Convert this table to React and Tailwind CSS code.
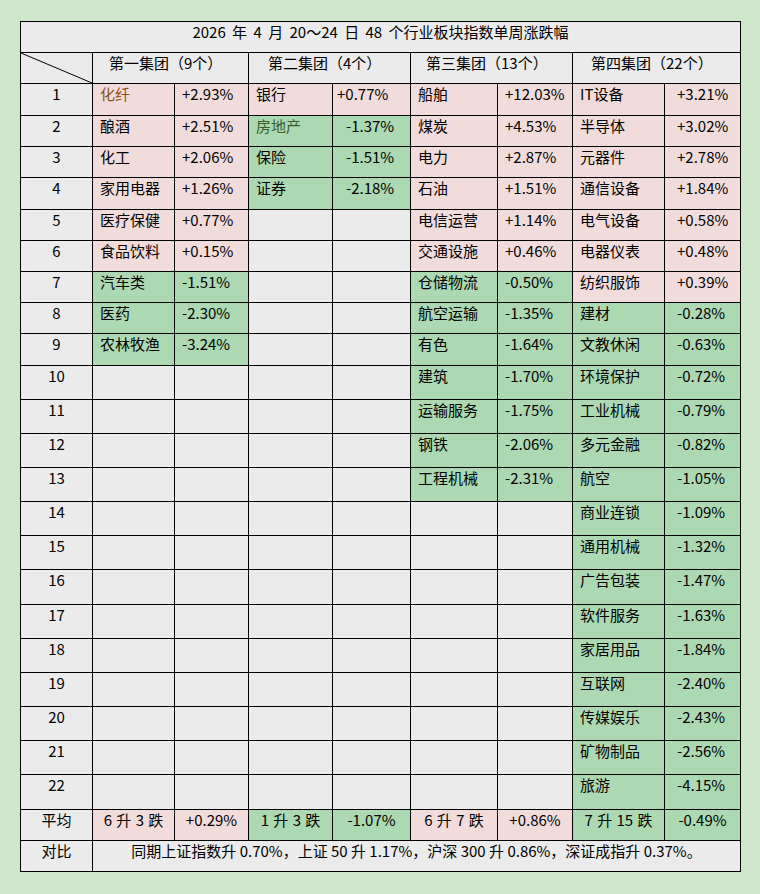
import React from "react";

const groups = [
  [
    ["化纤", "+2.93%"],
    ["酿酒", "+2.51%"],
    ["化工", "+2.06%"],
    ["家用电器", "+1.26%"],
    ["医疗保健", "+0.77%"],
    ["食品饮料", "+0.15%"],
    ["汽车类", "-1.51%"],
    ["医药", "-2.30%"],
    ["农林牧渔", "-3.24%"],
  ],
  [
    ["银行", "+0.77%"],
    ["房地产", "-1.37%"],
    ["保险", "-1.51%"],
    ["证券", "-2.18%"],
  ],
  [
    ["船舶", "+12.03%"],
    ["煤炭", "+4.53%"],
    ["电力", "+2.87%"],
    ["石油", "+1.51%"],
    ["电信运营", "+1.14%"],
    ["交通设施", "+0.46%"],
    ["仓储物流", "-0.50%"],
    ["航空运输", "-1.35%"],
    ["有色", "-1.64%"],
    ["建筑", "-1.70%"],
    ["运输服务", "-1.75%"],
    ["钢铁", "-2.06%"],
    ["工程机械", "-2.31%"],
  ],
  [
    ["IT设备", "+3.21%"],
    ["半导体", "+3.02%"],
    ["元器件", "+2.78%"],
    ["通信设备", "+1.84%"],
    ["电气设备", "+0.58%"],
    ["电器仪表", "+0.48%"],
    ["纺织服饰", "+0.39%"],
    ["建材", "-0.28%"],
    ["文教休闲", "-0.63%"],
    ["环境保护", "-0.72%"],
    ["工业机械", "-0.79%"],
    ["多元金融", "-0.82%"],
    ["航空", "-1.05%"],
    ["商业连锁", "-1.09%"],
    ["通用机械", "-1.32%"],
    ["广告包装", "-1.47%"],
    ["软件服务", "-1.63%"],
    ["家居用品", "-1.84%"],
    ["互联网", "-2.40%"],
    ["传媒娱乐", "-2.43%"],
    ["矿物制品", "-2.56%"],
    ["旅游", "-4.15%"],
  ],
];

const headers = [
  { text: "第一集团（9个）", pad: "pl-[16px]" },
  { text: "第二集团（4个）", pad: "pl-[19px]" },
  { text: "第三集团（13个）", pad: "pl-[15px]" },
  { text: "第四集团（22个）", pad: "pl-[18px]" },
];

const valuePad = ["pl-[7px]", "pl-[13px]", "pl-[7px]", "pl-[12px]"];

const averages = [
  ["6 升 3 跌", "+0.29%"],
  ["1 升 3 跌", "-1.07%"],
  ["6 升 7 跌", "+0.86%"],
  ["7 升 15 跌", "-0.49%"],
];

const PINK = "bg-[#f2dcdb]";
const GREEN = "bg-[#acd9b1]";
const GRAY = "bg-[#ebebeb]";

const nameColor = {
  "化纤": "text-[#8a5214]",
  "房地产": "text-[#3d5a2c]",
};

function Cell({ className = "", children }) {
  return (
    <div className={`whitespace-nowrap overflow-hidden leading-[20px] ${className}`}>
      {children}
    </div>
  );
}

export default function App() {
  const rows = [];
  for (let i = 0; i < 22; i++) {
    rows.push(
      <Cell key={`n${i}`} className={`${GRAY} text-center`}>
        {i + 1}
      </Cell>
    );
    groups.forEach((g, gi) => {
      const item = g[i];
      if (item) {
        const bg = item[1].startsWith("+") ? PINK : GREEN;
        const vp = gi === 1 && i === 0 ? "pl-[4px]" : valuePad[gi];
        rows.push(
          <Cell key={`a${i}-${gi}`} className={`${bg} pl-[7px] ${nameColor[item[0]] || ""}`}>
            {item[0]}
          </Cell>
        );
        rows.push(
          <Cell key={`b${i}-${gi}`} className={`${bg} ${vp}`}>
            {item[1]}
          </Cell>
        );
      } else {
        rows.push(<Cell key={`a${i}-${gi}`} className={GRAY} />);
        rows.push(<Cell key={`b${i}-${gi}`} className={GRAY} />);
      }
    });
  }

  return (
    <div
      className="w-[760px] h-[894px] bg-[#cfe8cc] pt-[21px] pl-[20px] text-[15px] text-black"
      style={{ fontFamily: '"Noto Sans CJK SC", "Noto Sans", sans-serif' }}
    >
      <div className="w-[721px] grid gap-px bg-black p-px grid-cols-[71px_81px_73px_83px_77px_86px_74px_91px_75px] grid-rows-[30px_30px_31px_30px_30px_31px_30px_30px_30px_30px_31px_33px_33px_33px_33px_33px_33px_34px_33px_33px_33px_33px_33px_34px_30px_30px]">
        <Cell className={`${GRAY} col-span-9 text-center [word-spacing:3px]`}>
          2026 年 4 月 20～24 日 48 个行业板块指数单周涨跌幅
        </Cell>

        <div className={`${GRAY} relative`}>
          <svg className="absolute inset-0" width="71" height="30" viewBox="0 0 71 30">
            <line x1="0" y1="0" x2="71" y2="30" stroke="black" strokeWidth="1" />
          </svg>
        </div>
        {headers.map((h) => (
          <Cell key={h.text} className={`${GRAY} col-span-2 ${h.pad}`}>
            {h.text}
          </Cell>
        ))}

        {rows}

        <Cell className={`${GRAY} text-center`}>平均</Cell>
        {averages.map(([a, v]) => {
          const bg = v.startsWith("+") ? PINK : GREEN;
          return (
            <React.Fragment key={a}>
              <Cell className={`${bg} text-center [word-spacing:1px]`}>{a}</Cell>
              <Cell className={`${bg} text-center`}>{v}</Cell>
            </React.Fragment>
          );
        })}

        <Cell className={`${GRAY} text-center`}>对比</Cell>
        <Cell className={`${GRAY} col-span-8 text-center`}>
          同期上证指数升 0.70%，上证 50 升 1.17%，沪深 300 升 0.86%，深证成指升 0.37%。
        </Cell>
      </div>
    </div>
  );
}
